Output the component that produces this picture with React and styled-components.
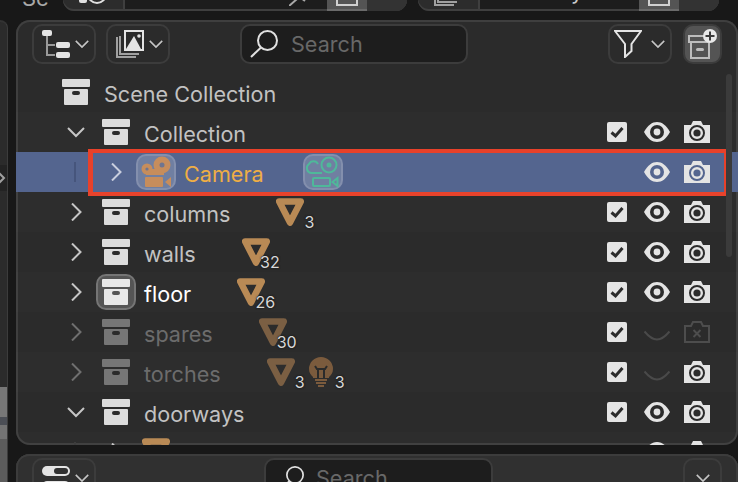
import React from 'react'
import styled, { createGlobalStyle } from 'styled-components'

const Global = createGlobalStyle`
  html, body { margin: 0; padding: 0; background: #181818; }
  * { box-sizing: border-box; }
  body { font-family: Inter, "Liberation Sans", sans-serif; }
`

const Page = styled.div`
  width: 738px;
  height: 482px;
  overflow: hidden;
  background: #181818;
  display: flex;
  flex-direction: column;
`

/* top strip, only the lower edge of the bar is in the picture */
const TopBar = styled.div`
  height: 11px;
  flex: none;
  overflow: hidden;
  display: flex;
  align-items: flex-end;
  padding-left: 22px;
`
const TopLabel = styled.div`
  width: 41px;
  height: 20px;
  font-size: 22px;
  line-height: 14px;
  color: #a8a8a8;
`
const Picker = styled.div`
  height: 40px;
  flex: none;
  display: flex;
  margin-right: ${p => p.$gap || 0}px;
  border-radius: 0 0 11px 11px;
  box-shadow: inset 0 -2px 0 #3f3f3f;
  background: #2c2c2c;
  overflow: hidden;
`
const PickerIcon = styled.div`
  width: 62px;
  display: flex;
  justify-content: center;
  align-items: flex-end;
  padding-bottom: 5px;
  border-right: 2px solid #3f3f3f;
`
const PickerField = styled.div`
  width: ${p => p.$w}px;
  background: #1d1d1d;
  color: #c8c8c8;
  font-size: 21.6px;
  line-height: 26px;
  padding: 7px 20px 0 17px;
  box-shadow: inset 0 -2px 0 #3f3f3f;
  display: flex;
  justify-content: space-between;
  align-items: flex-start;
`
const PinMark = styled.svg`
  margin-top: 20px;
  flex: none;
`
const PickerBtn = styled.div`
  width: 40px;
  background: #545454;
  display: flex;
  align-items: flex-end;
  justify-content: center;
  padding-bottom: 5px;
  box-shadow: inset 0 -2px 0 #6a6a6a;
`
const PickerEnd = styled.div`
  width: 40px;
  background: #333;
`
const BtnSquare = styled.div`
  width: 22px;
  height: 22px;
  border: 2px solid #d0d0d0;
`

const Body = styled.div`
  flex: 1;
  min-height: 0;
  display: flex;
  padding-top: 9px;
`
const SideStrip = styled.div`
  width: 8px;
  flex: none;
  margin-right: 8px;
  border-radius: 0 12px 0 0;
  background: #2b2b2b;
  border-top: 2px solid #333;
  border-right: 1px solid #3c3c3c;
  display: flex;
  flex-direction: column;
  overflow: hidden;
`
const SideSpace = styled.div`
  height: ${p => p.$h}px;
  flex: none;
`
const SideTab = styled.div`
  height: 26px;
  flex: none;
  background: #232323;
  display: flex;
  align-items: center;
`
const SideView = styled.div`
  flex: 1;
  background: linear-gradient(180deg, #777 0 30px, #4b4e55 30px 38px, #737373 38px 52px, #5c5c5c 52px);
`
const Panels = styled.div`
  flex: 1;
  min-width: 0;
  display: flex;
  flex-direction: column;
  gap: 9px;
`
const Outliner = styled.div`
  position: relative;
  height: 425px;
  flex: none;
  overflow: hidden;
  background: #2b2b2b;
  border-radius: 14px;
  box-shadow: inset 0 0 0 2px #3f3f3f;
`
const Toolbar = styled.div`
  height: 52px;
  padding: 4px 16px 8px 16px;
  display: flex;
  align-items: stretch;
`
const MenuBtn = styled.div`
  width: ${p => p.$w || 64}px;
  margin-left: ${p => p.$ml || 0}px;
  border: 2px solid #3c3c3c;
  border-radius: 10px;
  background: ${p => (p.$on ? '#545454' : '#2b2b2b')};
  display: flex;
  align-items: center;
  justify-content: ${p => (p.$pad === undefined ? 'center' : 'flex-start')};
  padding-left: ${p => p.$pad || 0}px;
  gap: ${p => p.$gap || 0}px;
  flex: none;
`
const SearchBox = styled.div`
  width: ${p => p.$w}px;
  margin-left: ${p => p.$ml}px;
  flex: none;
  border: 2px solid #3c3c3c;
  border-radius: 10px;
  background: #1d1d1d;
  display: flex;
  align-items: center;
  padding-left: ${p => p.$pad}px;
  gap: ${p => p.$gap}px;
  color: #686868;
  font-size: 21.6px;
`
const Spacer = styled.div`
  flex: 1;
`
const Row = styled.div`
  position: relative;
  height: 40px;
  display: flex;
  align-items: center;
  padding-left: 40px;
  padding-right: 21px;
  background: ${p => (p.$selected ? '#54658f' : p.$alt ? 'rgba(255,255,255,0.012)' : 'transparent')};
`
const Cell = styled.div`
  position: relative;
  width: 40px;
  height: 40px;
  flex: none;
  display: flex;
  align-items: center;
  justify-content: center;
`
const Guide = styled(Cell)`
  justify-content: flex-start;
  padding-left: 18px;
  &::before {
    content: '';
    width: 2px;
    height: 20px;
    background: ${p => (p.$selected ? '#46557c' : '#3d3d3d')};
  }
`
const IconBadge = styled.div`
  width: 40px;
  height: 36px;
  border-radius: 10px;
  display: flex;
  align-items: center;
  justify-content: center;
  background: ${p => (p.$tone === 'grey' ? '#555' : 'rgba(255,255,255,0.17)')};
  border: 2px solid ${p => (p.$tone === 'grey' ? '#757575' : 'rgba(255,255,255,0.13)')};
`
const Name = styled.div`
  margin-left: 8px;
  margin-right: ${p => p.$mr || 0}px;
  font-size: 21.6px;
  line-height: 40px;
  padding-top: 3px;
  white-space: nowrap;
  color: ${p => p.$color || '#c2c2c2'};
`
const Count = styled.span`
  position: absolute;
  right: -4px;
  bottom: 1px;
  font-size: 16px;
  line-height: 18px;
  color: #d8d8d8;
  text-shadow: 0 0 2px #1b1b1b, 0 0 2px #1b1b1b;
`
const Controls = styled.div`
  margin-left: auto;
  display: flex;
  flex: none;
`
const RedFrame = styled.div`
  position: absolute;
  left: 72px;
  right: 10px;
  top: -3px;
  bottom: -4px;
  border: 4px solid #e8412a;
  border-left-width: 5px;
  pointer-events: none;
`
const ScrollThumb = styled.div`
  position: absolute;
  top: 54px;
  right: 6px;
  width: 6px;
  height: 183px;
  border-radius: 3px;
  background: #3b3b3b;
`
const PropsPanel = styled.div`
  flex: 1;
  background: #303030;
  border-radius: 14px 14px 0 0;
  box-shadow: inset 0 2px 0 #3c3c3c, inset 2px 0 0 #3c3c3c, inset -2px 0 0 #3c3c3c;
  padding: 4px 16px 0 16px;
  display: flex;
  align-items: flex-start;
`
const PropsCtl = styled(MenuBtn)`
  height: 40px;
  background: #303030;
`
const PropsSearch = styled(SearchBox)`
  height: 40px;
`

const Chevron = ({ dir = 'down', color = '#c6c6c6', size = 18 }) => (
  <svg width={size} height={size} viewBox="0 0 18 18" fill="none" stroke={color} strokeWidth="2">
    {dir === 'down' ? <path d="M1 5l8 8 8-8" /> : <path d="M5 0.5l8.5 8.5-8.5 8.5" />}
  </svg>
)

const Archive = ({ color = '#dcdcdc', hole = '#2b2b2b' }) => (
  <svg width="28" height="26" viewBox="0 0 28 26">
    <rect x="0" y="0" width="28" height="8" rx="1" fill={color} />
    <rect x="2" y="10" width="24" height="16" rx="1" fill={color} />
    <rect x="10" y="12" width="8" height="4" rx="2" fill={hole} />
  </svg>
)

const Tri = ({ color = '#b98a55' }) => (
  <svg width="28" height="28" viewBox="0 0 28 28" fill="none" stroke={color} strokeWidth="6.5" strokeLinejoin="round">
    <path d="M3.2 3.4h21.6L14 24.6z" />
  </svg>
)

const Bulb = () => (
  <svg width="26" height="30" viewBox="0 0 26 30">
    <path d="M13 0a12 12 0 0 1 12 12c0 4-2 6-4 8v1H5v-1c-2-2-4-4-4-8A12 12 0 0 1 13 0z" fill="#7b5b3d" />
    <path d="M7 9l2 3h8l2-3M10 12v9M16 12v9" fill="none" stroke="#2b2b2b" strokeWidth="2" />
    <path d="M7 23h12M8 26h10M10 29h6" stroke="#7b5b3d" strokeWidth="2" />
  </svg>
)

const CamFilled = () => (
  <svg width="36" height="32" viewBox="0 0 36 32">
    <circle cx="24" cy="9" r="8.5" fill="#c68d5c" />
    <circle cx="9" cy="13" r="5.5" fill="#c68d5c" />
    <path d="M8 13h18v6H8z" fill="#c68d5c" />
    <circle cx="24" cy="9" r="2.5" fill="#6f7590" />
    <circle cx="9" cy="13" r="1.6" fill="#6f7590" />
    <rect x="7" y="21" width="18" height="10" rx="1" fill="#c68d5c" />
    <path d="M27 26l6-5v10z" fill="#c68d5c" />
  </svg>
)

const CamOutline = () => (
  <svg width="36" height="32" viewBox="0 0 36 32" fill="none" stroke="#4fb89a" strokeWidth="2">
    <circle cx="24" cy="9" r="7.5" />
    <path d="M17 17H6a5 5 0 0 1-2-9 5 5 0 0 1 9 0" />
    <circle cx="24" cy="9" r="1.5" fill="#4fb89a" />
    <rect x="8" y="22" width="17" height="8" rx="1" />
    <path d="M27.5 26l5-4v8z" />
  </svg>
)

const Edge = () => (
  <svg width="28" height="8" viewBox="0 0 28 8" fill="none" stroke="#4fb89a" strokeWidth="2">
    <rect x="1" y="1" width="6" height="6" />
    <rect x="21" y="1" width="6" height="6" />
    <path d="M7 4h14" />
  </svg>
)

const Check = () => (
  <svg width="20" height="20" viewBox="0 0 20 20">
    <rect width="20" height="20" rx="2" fill="#e4e4e4" />
    <path d="M4.5 10.5l4 3.5 7-8" fill="none" stroke="#2b2b2b" strokeWidth="3" />
  </svg>
)

const Eye = ({ hole = '#2b2b2b' }) => (
  <svg width="26" height="20" viewBox="0 0 26 20">
    <path d="M0 10C4 3 8 0 13 0s9 3 13 10c-4 7-8 10-13 10S4 17 0 10z" fill="#e4e4e4" />
    <circle cx="13" cy="10" r="7" fill={hole} />
    <circle cx="13" cy="10" r="3.4" fill="#e4e4e4" />
  </svg>
)

const EyeOff = () => (
  <svg width="26" height="20" viewBox="0 0 26 20" fill="none" stroke="#4a4a4a" strokeWidth="2">
    <path d="M0.5 9.5C5 15 9 17.5 13 17.5S21 15 25.5 9.5" />
  </svg>
)

const Cam = ({ ring = '#2b2b2b' }) => (
  <svg width="26" height="22" viewBox="0 0 26 22">
    <path d="M0 4h7l2-4h8l2 4h7v18H0z" fill="#e4e4e4" />
    <circle cx="13" cy="12" r="7" fill="none" stroke={ring} strokeWidth="2" />
    <circle cx="13" cy="12" r="3.6" fill={ring} />
  </svg>
)

const CamOff = () => (
  <svg width="26" height="22" viewBox="0 0 26 22" fill="none" stroke="#4d4d4d" strokeWidth="2">
    <path d="M1 5h6l2-4h8l2 4h6v16H1z" />
    <path d="M9.5 9l7 7M16.5 9l-7 7" />
  </svg>
)

const DisplayMode = () => (
  <svg width="28" height="28" viewBox="0 0 28 28">
    <rect x="0" y="0" width="10" height="6" rx="2" fill="#e4e4e4" />
    <path d="M5 6v19h8M5 15h8" fill="none" stroke="#9a9a9a" strokeWidth="2" />
    <rect x="14" y="12" width="14" height="6" rx="2" fill="#e4e4e4" />
    <rect x="14" y="22" width="14" height="6" rx="2" fill="#e4e4e4" />
  </svg>
)

const ImageStack = () => (
  <svg width="28" height="28" viewBox="0 0 28 28" fill="none">
    <path d="M1 7v20h19M4 6v18h19" stroke="#a0a0a0" strokeWidth="2" />
    <rect x="9" y="1" width="18" height="19" stroke="#e4e4e4" strokeWidth="2" />
    <path d="M10 19l8-13 7 13z" fill="#e4e4e4" />
    <circle cx="23" cy="6" r="1.8" fill="#e4e4e4" />
  </svg>
)

const SceneMark = () => (
  <svg width="28" height="12" viewBox="0 0 28 12" fill="none">
    <rect x="0" y="3" width="8" height="6" rx="2" fill="#e0e0e0" />
    <circle cx="18" cy="0" r="9" stroke="#e0e0e0" strokeWidth="2" />
  </svg>
)

const Glass = ({ size = 28 }) => (
  <svg width={size} height={size} viewBox="0 0 28 28" fill="none" stroke="#e0e0e0" strokeWidth="2">
    <circle cx="17.5" cy="10.5" r="9.5" />
    <path d="M11 17.5L1 27" />
  </svg>
)

const Funnel = () => (
  <svg width="28" height="28" viewBox="0 0 28 28" fill="none" stroke="#e4e4e4" strokeWidth="2">
    <path d="M1 1h26L17.5 14v7L11 27V14z" />
  </svg>
)

const NewCollection = () => (
  <svg width="30" height="30" viewBox="0 0 30 30">
    <g fill="none" stroke="#bdbdbd" strokeWidth="2">
      <rect x="1" y="7" width="20" height="6" />
      <rect x="3" y="13" width="18" height="16" />
    </g>
    <rect x="8" y="19" width="8" height="3" rx="1.5" fill="#bdbdbd" />
    <circle cx="22" cy="7" r="7" fill="#e8e8e8" />
    <path d="M22 2.5v9M17.5 7h9" stroke="#3a3a3a" strokeWidth="2" />
  </svg>
)

const Toggle = () => (
  <svg width="28" height="28" viewBox="0 0 28 28">
    <rect x="0" y="2" width="28" height="10" rx="5" fill="#e4e4e4" />
    <rect x="12" y="4" width="14" height="6" rx="3" fill="#303030" />
    <rect x="0" y="17" width="28" height="10" rx="5" fill="#e4e4e4" />
  </svg>
)

const Visible = ({ check = true, eye = true, cam = true, selected }) => (
  <Controls>
    <Cell>{check && <Check />}</Cell>
    <Cell>{eye ? <Eye hole={selected ? '#54658f' : undefined} /> : <EyeOff />}</Cell>
    <Cell>{cam ? <Cam ring={selected ? '#54658f' : undefined} /> : <CamOff />}</Cell>
  </Controls>
)

const MeshCount = ({ n, dim }) => (
  <Cell>
    <Tri color={dim ? '#7b5f43' : '#b98a55'} />
    <Count>{n}</Count>
  </Cell>
)

const CollectionRow = ({ name, open, dim, active, alt, children, eye, cam }) => (
  <Row $alt={alt}>
    <Cell>
      <Chevron dir={open ? 'down' : 'right'} color={dim ? '#6f6f6f' : '#c6c6c6'} />
    </Cell>
    <Cell>
      {active ? (
        <IconBadge $tone="grey">
          <Archive color="#e8e8e8" hole="#555" />
        </IconBadge>
      ) : (
        <Archive color={dim ? '#767676' : '#dcdcdc'} />
      )}
    </Cell>
    <Name $mr={children ? 40 : 0} $color={active ? '#fff' : dim ? '#6c6c6c' : undefined}>{name}</Name>
    {children}
    <Visible eye={eye} cam={cam} />
  </Row>
)

export default function App() {
  return (
    <>
      <Global />
      <Page>
        <TopBar>
          <TopLabel>Sc</TopLabel>
          <Picker $gap={11}>
            <PickerIcon><SceneMark /></PickerIcon>
            <PickerField $w={202}>
              Scene
              <PinMark width="18" height="8" viewBox="0 0 18 8" fill="none" stroke="#a8a8a8" strokeWidth="2">
                <path d="M0 8L8 1M12 0l4 3" />
              </PinMark>
            </PickerField>
            <PickerBtn><BtnSquare /></PickerBtn>
            <PickerEnd />
          </Picker>
          <Picker>
            <PickerIcon><ImageStack /></PickerIcon>
            <PickerField $w={159}>ViewLayer</PickerField>
            <PickerBtn><BtnSquare /></PickerBtn>
            <PickerEnd />
          </Picker>
        </TopBar>
        <Body>
          <SideStrip>
            <SideSpace $h={143} />
            <SideTab>
              <svg width="7" height="16" viewBox="0 0 7 16" fill="none" stroke="#a0a0a0" strokeWidth="2">
                <path d="M-3 1l7 7-7 7" />
              </svg>
            </SideTab>
            <SideSpace $h={196} />
            <SideView />
          </SideStrip>
          <Panels>
            <Outliner>
              <Toolbar>
                <MenuBtn $pad={8} $gap={5}><DisplayMode /><Chevron size={14} /></MenuBtn>
                <MenuBtn $ml={10} $pad={8} $gap={5}><ImageStack /><Chevron size={14} /></MenuBtn>
                <SearchBox $w={228} $ml={70} $pad={8} $gap={13}><Glass />Search</SearchBox>
                <Spacer />
                <MenuBtn $w={64} $pad={4} $gap={9}><Funnel /><Chevron size={14} /></MenuBtn>
                <MenuBtn $w={39} $ml={11} $on><NewCollection /></MenuBtn>
              </Toolbar>
              <Row>
                <Cell><Archive /></Cell>
                <Name>Scene Collection</Name>
              </Row>
              <CollectionRow name="Collection" open alt />
              <Row $selected>
                <Guide $selected />
                <Cell><Chevron dir="right" color="#c9cede" /></Cell>
                <Cell><IconBadge><CamFilled /></IconBadge></Cell>
                <Name $mr={39} $color="#efae45">Camera</Name>
                <Cell><IconBadge><CamOutline /></IconBadge></Cell>
                <Visible check={false} selected />
                <RedFrame />
              </Row>
              <CollectionRow name="columns" alt><MeshCount n="3" /></CollectionRow>
              <CollectionRow name="walls"><MeshCount n="32" /></CollectionRow>
              <CollectionRow name="floor" active alt><MeshCount n="26" /></CollectionRow>
              <CollectionRow name="spares" dim eye={false} cam={false}><MeshCount n="30" dim /></CollectionRow>
              <CollectionRow name="torches" dim alt eye={false}>
                <MeshCount n="3" dim />
                <Cell>
                  <Bulb />
                  <Count>3</Count>
                </Cell>
              </CollectionRow>
              <CollectionRow name="doorways" open />
              <Row $alt>
                <Guide />
                <Cell><Chevron dir="right" /></Cell>
                <Cell><Tri /></Cell>
                <Name $mr={150} />
                <Cell><Edge /></Cell>
                <Visible check={false} />
              </Row>
              <ScrollThumb />
            </Outliner>
            <PropsPanel>
              <PropsCtl $pad={8} $gap={5}><Toggle /><Chevron size={14} /></PropsCtl>
              <PropsSearch $w={229} $ml={168} $pad={14} $gap={12}><Glass size={24} />Search</PropsSearch>
              <Spacer />
              <PropsCtl $w={39}><Chevron size={14} /></PropsCtl>
            </PropsPanel>
          </Panels>
        </Body>
      </Page>
    </>
  )
}
